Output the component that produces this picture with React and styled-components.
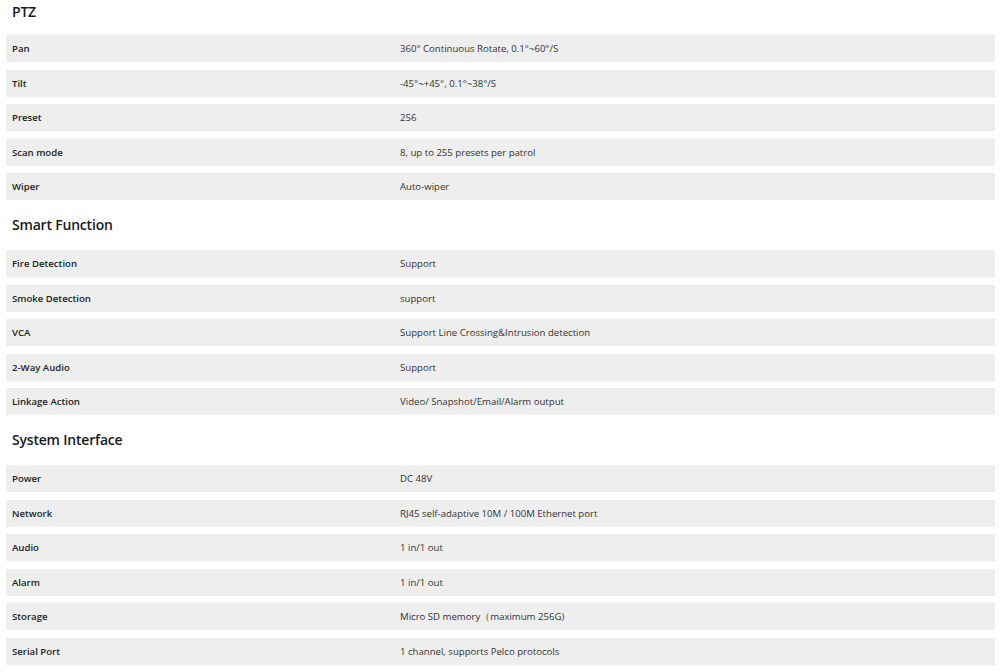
import React from "react";
import styled, { createGlobalStyle } from "styled-components";

const sections = [
  {
    title: "PTZ",
    rows: [
      ["Pan", "360° Continuous Rotate, 0.1°~60°/S"],
      ["Tilt", "-45°~+45°, 0.1°~38°/S"],
      ["Preset", "256"],
      ["Scan mode", "8, up to 255 presets per patrol"],
      ["Wiper", "Auto-wiper"],
    ],
  },
  {
    title: "Smart Function",
    rows: [
      ["Fire Detection", "Support"],
      ["Smoke Detection", "support"],
      ["VCA", "Support Line Crossing&Intrusion detection"],
      ["2-Way Audio", "Support"],
      ["Linkage Action", "Video/ Snapshot/Email/Alarm output"],
    ],
  },
  {
    title: "System Interface",
    rows: [
      ["Power", "DC 48V"],
      ["Network", "RJ45 self-adaptive 10M / 100M Ethernet port"],
      ["Audio", "1 in/1 out"],
      ["Alarm", "1 in/1 out"],
      ["Storage", "Micro SD memory（maximum 256G)"],
      ["Serial Port", "1 channel, supports Pelco protocols"],
    ],
  },
];

const GlobalStyle = createGlobalStyle`
  body {
    margin: 0;
    background: #fff;
    font-family: "Open Sans", "Noto Sans", sans-serif;
    overflow: hidden;
  }
`;

const App = () => {
  return (
    <>
      <GlobalStyle />
      <Page>
        {sections.map((section) => (
          <Section key={section.title}>
            <Title>{section.title}</Title>
            <Rows>
              {section.rows.map(([label, value]) => (
                <Row key={label}>
                  <Label>{label}</Label>
                  <Value>{value}</Value>
                </Row>
              ))}
            </Rows>
          </Section>
        ))}
      </Page>
    </>
  );
};

export default App;

const Page = styled.div`
  width: 1000px;
  height: 672px;
  padding: 0 5px 0 6px;
  box-sizing: border-box;
  display: flex;
  flex-direction: column;
  overflow: hidden;
`;

const Section = styled.div`
  display: flex;
  flex-direction: column;

  &:first-child > h2 {
    height: 47.5px;
    padding-bottom: 0;
    margin-top: -12.5px;
  }
`;

const Title = styled.h2`
  margin: 0;
  height: 50px;
  padding: 0 0 2px 6px;
  box-sizing: border-box;
  display: flex;
  align-items: center;
  font-size: 14px;
  font-weight: 600;
  color: #1a1a1a;
  letter-spacing: -0.2px;
`;

const Rows = styled.div`
  display: flex;
  flex-direction: column;
  gap: 7.5px;
`;

const Row = styled.div`
  height: 27px;
  background: #eeeeee;
  display: grid;
  grid-template-columns: 388px 1fr;
  align-items: center;
  padding-left: 6px;
  font-size: 9.6px;
`;

const Label = styled.span`
  font-weight: 600;
  color: #222;
`;

const Value = styled.span`
  color: #333;
`;
